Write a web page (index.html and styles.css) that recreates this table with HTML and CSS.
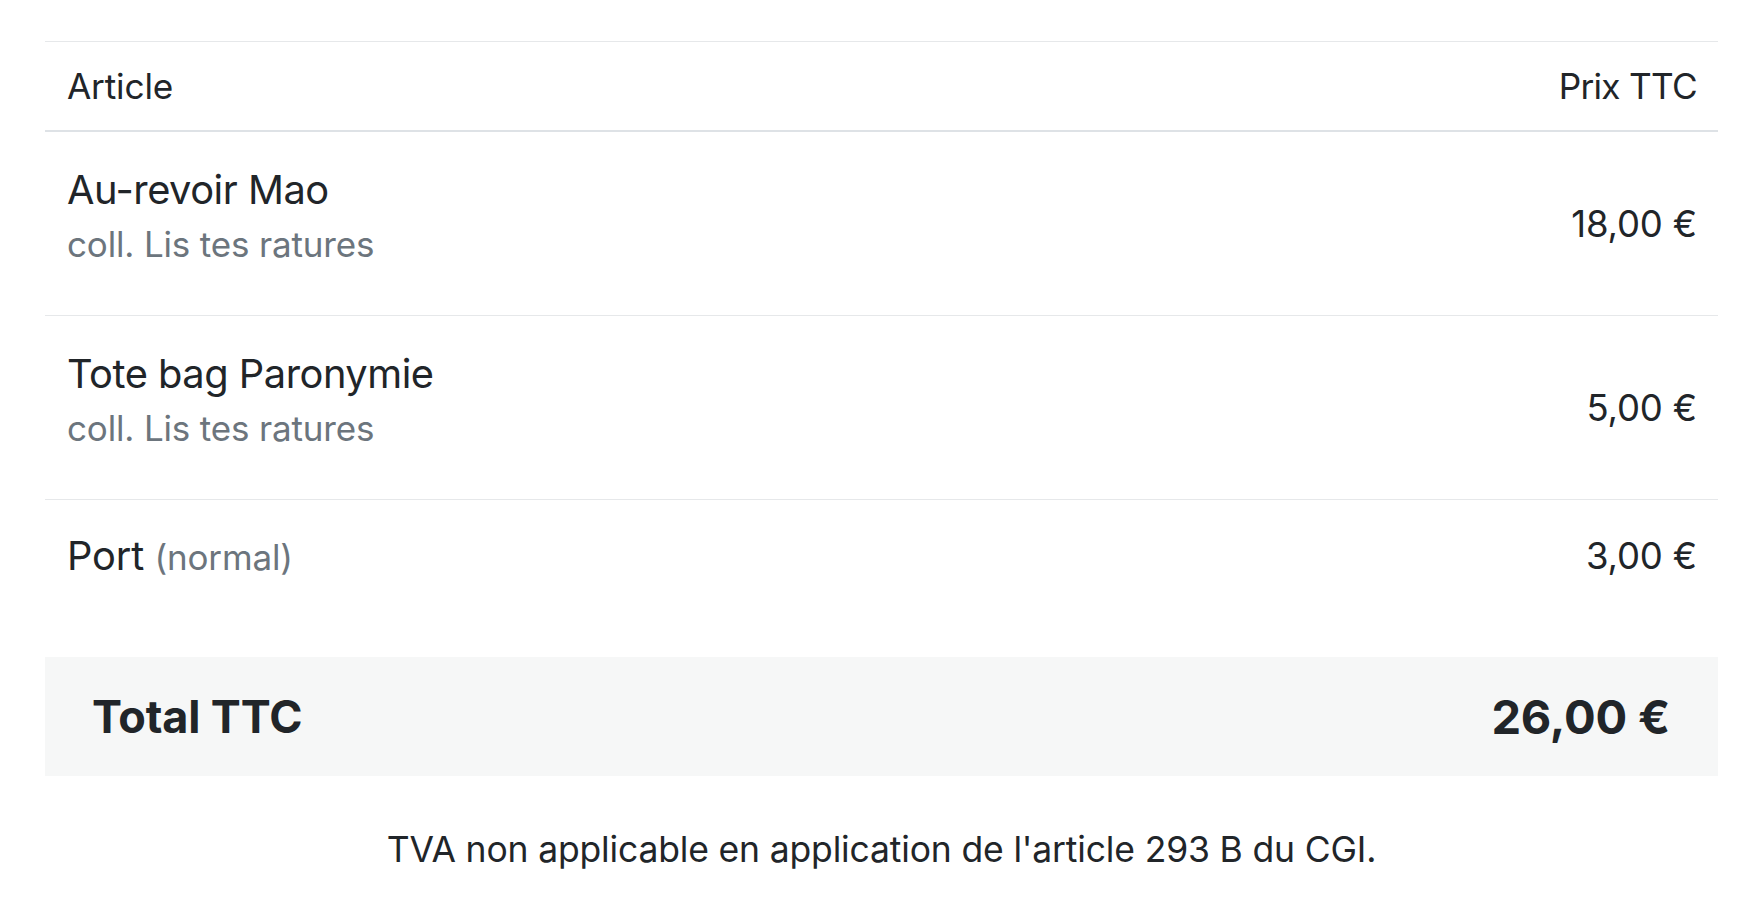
FILE: index.html
```html
<!DOCTYPE html>
<html lang="fr">
<head>
<meta charset="utf-8">
<title>Panier</title>
<link rel="stylesheet" href="styles.css">
</head>
<body>
<main class="cart">
  <div class="table">
    <div class="row head">
      <div class="cell">Article</div>
      <div class="cell price head-price">Prix TTC</div>
    </div>
    <div class="row item">
      <div class="cell">
        <div class="title">Au-revoir Mao</div>
        <div class="sub">coll. Lis tes ratures</div>
      </div>
      <div class="cell price">18,00 €</div>
    </div>
    <div class="row item">
      <div class="cell">
        <div class="title">Tote bag Paronymie</div>
        <div class="sub">coll. Lis tes ratures</div>
      </div>
      <div class="cell price">5,00 €</div>
    </div>
    <div class="row port">
      <div class="cell"><span class="title">Port</span> <span class="sub note">(normal)</span></div>
      <div class="cell price">3,00 €</div>
    </div>
  </div>
  <div class="total">
    <span>Total TTC</span>
    <span class="total-amount">26,00 €</span>
  </div>
  <p class="tva">TVA non applicable en application de l'article 293 B du CGI.</p>
</main>
</body>
</html>
```
FILE: styles.css
```css
html, body {
  margin: 0;
  padding: 0;
  background: #ffffff;
}
body {
  font-family: Inter, "Liberation Sans", Arial, sans-serif;
  color: #212529;
  letter-spacing: -0.01em;
}
.cart {
  margin: 41px 34px 0 45px;
}
.table {
  display: flex;
  flex-direction: column;
  border-top: 1px solid #e6e8ea;
}
.row {
  display: flex;
  justify-content: space-between;
  align-items: center;
  padding: 0 21px 0 22px;
}
.head {
  height: 88px;
  border-bottom: 2px solid #dee2e6;
  font-size: 35.2px;
}
.head .head-price {
  font-size: 35.2px;
  letter-spacing: -0.02em;
}
.item {
  height: 183px;
  border-bottom: 1px solid #e6e8ea;
}
.port {
  height: 112px;
}
.title {
  font-size: 39.8px;
  line-height: 58px;
}
.item .title {
  letter-spacing: -0.012em;
}
.sub {
  font-size: 35px;
  line-height: 48px;
  color: #6c757d;
}
.note {
  margin-left: 6px;
}
.item .cell:first-child {
  margin-top: -19px;
}
.item .sub {
  margin-top: 1px;
}
.price {
  font-size: 36.5px;
  text-align: right;
}
.total {
  margin-top: 45px;
  height: 119px;
  background: #f6f7f7;
  display: flex;
  justify-content: space-between;
  align-items: center;
  padding: 0 48px 0 47px;
  font-size: 45px;
  font-weight: 700;
}
.total-amount {
  font-size: 47px;
}
.tva {
  margin: 0;
  padding-top: 52px;
  text-align: center;
  font-size: 35.5px;
}
```
